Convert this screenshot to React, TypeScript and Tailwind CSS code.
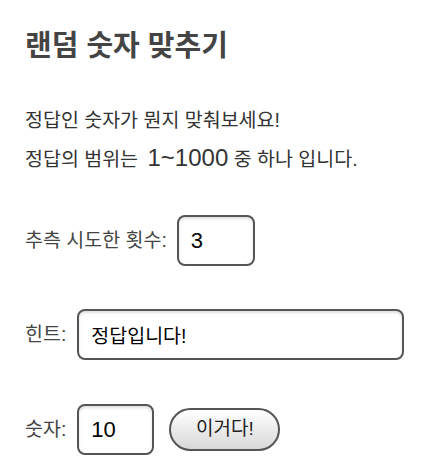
export default function App() {
  return (
    <div
      className="min-h-screen bg-white px-[25px] pt-[26px] text-[#444]"
      style={{ fontFamily: '"Liberation Sans", "Noto Sans CJK KR", sans-serif' }}
    >
      <h1 className="text-[29px] font-bold leading-[40px] text-[#444]">랜덤 숫자 맞추기</h1>

      <div className="mt-[36px] text-[19.5px] leading-[37px] text-[#333]">
        <p>정답인 숫자가 뭔지 맞춰보세요!</p>
        <p>
          정답의 범위는 <span className="ml-[4px] text-[24px]">1~1000</span> 중 하나 입니다.
        </p>
      </div>

      <div className="mt-[37px] flex items-center gap-[10px]">
        <span className="text-[19.5px]">추측 시도한 횟수:</span>
        <input
          readOnly
          value="3"
          className="h-[51px] w-[78px] rounded-[8px] border-2 border-[#555] px-[12px] text-[22px] text-black shadow-[inset_0_2px_3px_rgba(0,0,0,0.12)] outline-none"
        />
      </div>

      <div className="mt-[43px] flex items-center gap-[11px]">
        <span className="text-[19.5px]">힌트:</span>
        <input
          readOnly
          value="정답입니다!"
          className="h-[51px] w-[327px] rounded-[8px] border-2 border-[#555] px-[12px] text-[19.5px] text-black shadow-[inset_0_2px_3px_rgba(0,0,0,0.12)] outline-none"
        />
      </div>

      <div className="mt-[44px] flex items-center">
        <span className="mr-[11px] text-[19.5px]">숫자:</span>
        <input
          readOnly
          value="10"
          className="h-[51px] w-[77px] rounded-[8px] border-2 border-[#555] px-[12px] text-[22px] text-black shadow-[inset_0_2px_3px_rgba(0,0,0,0.12)] outline-none"
        />
        <button className="ml-[15px] h-[43px] w-[111px] rounded-full border-2 border-[#555] bg-gradient-to-b from-white to-[#d8d8d8] text-[19px] text-[#222]">
          이거다!
        </button>
      </div>
    </div>
  );
}
